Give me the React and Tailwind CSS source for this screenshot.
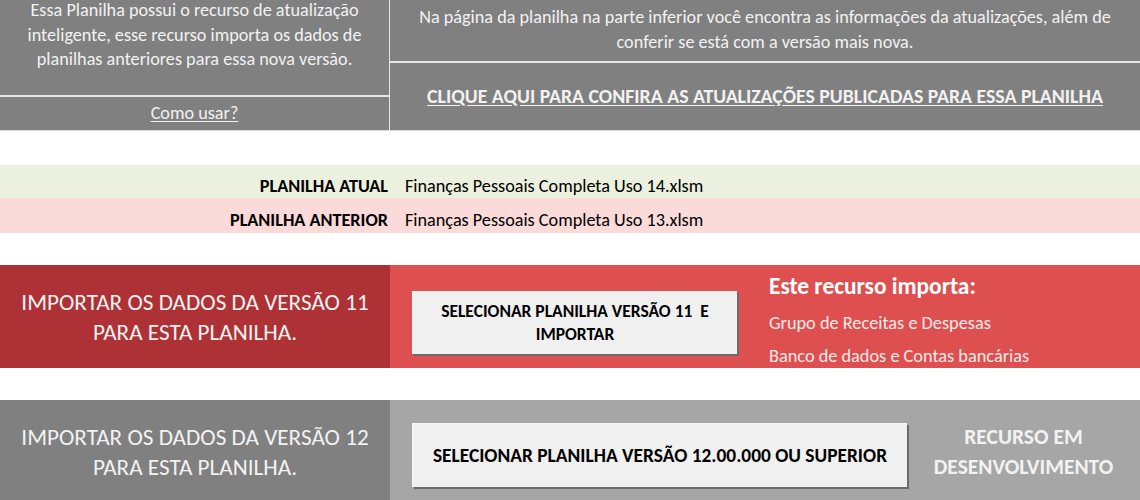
export default function App() {
  return (
    <div className="w-[1140px] h-[500px] bg-white overflow-hidden font-[Carlito,Calibri,Lato,sans-serif]">
      {/* Top info panel */}
      <div className="flex h-[131px] bg-[#808080] border-b border-[#d9d9d9] text-[#f2f2f2]">
        <div className="w-[390px] flex flex-col border-r border-[#e6e6e6]">
          <div className="h-[97px] border-b-2 border-[#e6e6e6] text-center text-[18.2px] leading-[24.5px] overflow-hidden">
            <div className="-mt-[2px]">
              Essa Planilha possui o recurso de atualização
              <br />
              inteligente, esse recurso importa os dados de
              <br />
              planilhas anteriores para essa nova versão.
            </div>
          </div>
          <div className="flex-1 flex items-center justify-center text-[18.2px]">
            <span className="underline underline-offset-2">Como usar?</span>
          </div>
        </div>
        <div className="flex-1 flex flex-col">
          <div className="h-[63px] border-b-2 border-[#e6e6e6] flex items-center justify-center text-center text-[18.2px] leading-[25px]">
            <div className="-mt-[2px]">
              Na página da planilha na parte inferior você encontra as informações da atualizações, além de
              <br />
              conferir se está com a versão mais nova.
            </div>
          </div>
          <div className="flex-1 flex items-center justify-center text-[19.8px] font-bold">
            <span className="underline underline-offset-2">CLIQUE AQUI PARA CONFIRA AS ATUALIZAÇÕES PUBLICADAS PARA ESSA PLANILHA</span>
          </div>
        </div>
      </div>

      <div className="h-[34px]" />

      {/* File rows */}
      <div className="flex h-[33px] bg-[#ebf1de] text-[18.2px] leading-[22px] text-black items-end pb-[1px]">
        <div className="w-[390px] text-right pr-[2px] font-bold">PLANILHA ATUAL</div>
        <div className="pl-[15px]">Finanças Pessoais Completa Uso 14.xlsm</div>
      </div>
      <div className="flex h-[35px] bg-[#fadbda] text-[18.2px] leading-[22px] text-black items-end pb-[2px]">
        <div className="w-[390px] text-right pr-[2px] font-bold">PLANILHA ANTERIOR</div>
        <div className="pl-[15px]">Finanças Pessoais Completa Uso 13.xlsm</div>
      </div>

      <div className="h-[32px]" />

      {/* Version 11 import */}
      <div className="flex h-[103px]">
        <div className="w-[390px] bg-[#ae3135] flex items-center justify-center text-center text-[23.2px] leading-[30px] text-[#f2f2f2]">
          <div>
            IMPORTAR OS DADOS DA VERSÃO 11
            <br />
            PARA ESTA PLANILHA.
          </div>
        </div>
        <div className="flex-1 bg-[#de5050] flex">
          <div className="pl-[22px] pt-[26px]">
            <button className="w-[325px] h-[63px] bg-[#f0f0f0] border-t border-l border-[#f8f8f8] shadow-[2px_2px_0_#6b6b6b] flex items-center justify-center text-center text-[17.5px] font-bold leading-[23px] text-black">
              <span>
                SELECIONAR PLANILHA VERSÃO 11&nbsp; E
                <br />
                IMPORTAR
              </span>
            </button>
          </div>
          <div className="pl-[32px] text-white flex flex-col">
            <div className="text-[23.4px] font-bold leading-[26px] pt-[8px]">Este recurso importa:</div>
            <div className="text-[18.3px] leading-[33px] pt-[8px] text-[#fbeaea]">Grupo de Receitas e Despesas</div>
            <div className="text-[18.3px] leading-[33px] text-[#fbeaea]">Banco de dados e Contas bancárias</div>
          </div>
        </div>
      </div>

      <div className="h-[32px]" />

      {/* Version 12 import */}
      <div className="flex h-[100px]">
        <div className="w-[390px] bg-[#808080] flex items-center justify-center text-center text-[23.2px] leading-[30px] text-[#f2f2f2]">
          <div className="mt-[4px]">
            IMPORTAR OS DADOS DA VERSÃO 12
            <br />
            PARA ESTA PLANILHA.
          </div>
        </div>
        <div className="flex-1 bg-[#a6a6a6] flex">
          <div className="pl-[22px] pt-[23px]">
            <button className="w-[495px] h-[64px] bg-[#f0f0f0] border-t border-l border-[#f8f8f8] shadow-[2px_2px_0_#6b6b6b] flex items-center justify-center text-[19.4px] font-bold text-black">
              SELECIONAR PLANILHA VERSÃO 12.00.000 OU SUPERIOR
            </button>
          </div>
          <div className="flex-1 flex items-center justify-center text-center text-[21.5px] font-bold leading-[30px] text-[#f2f2f2]">
            <div className="mt-[4px]">
              RECURSO EM
              <br />
              DESENVOLVIMENTO
            </div>
          </div>
        </div>
      </div>
    </div>
  );
}
